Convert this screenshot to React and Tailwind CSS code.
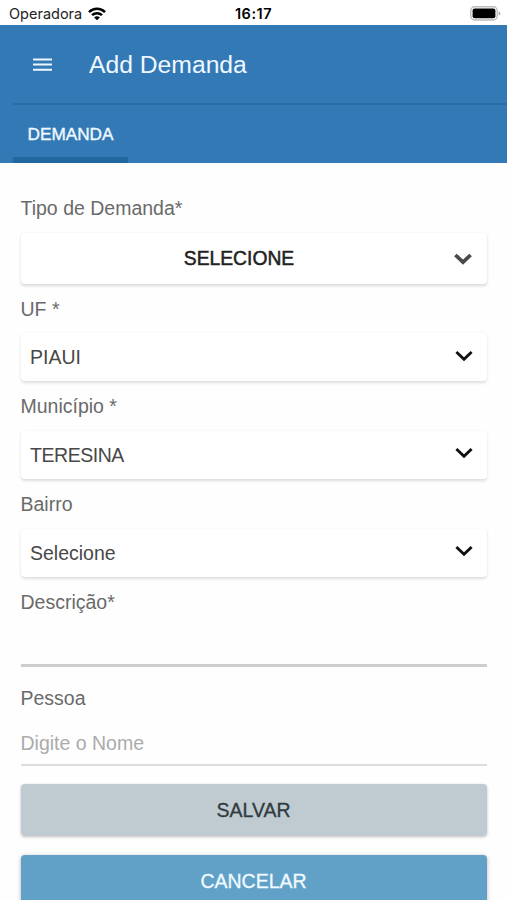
import React from "react";

function Chevron({ muted }) {
  return (
    <svg
      width="18"
      height="12"
      viewBox="0 0 18 12"
      fill="none"
      className={muted ? "mr-[15px] mt-px shrink-0 stroke-[#4a4a4a]" : "mr-[14px] -mt-[3px] shrink-0 stroke-[#111111]"}
      strokeWidth={muted ? 3.7 : 2.9}
    >
      <path d="M1.4 2 L9 9.2 L16.6 2" />
    </svg>
  );
}

function Label({ children }) {
  return <div className="h-[24px] whitespace-nowrap text-[19.5px] leading-[24px] text-[#6a6a6a]">{children}</div>;
}

function SelectField({ label, value, tight }) {
  return (
    <div className="flex flex-col gap-[12.5px]">
      <Label>{label}</Label>
      <div className="flex h-[48px] items-center justify-between rounded-[4px] bg-white pl-[9.5px] shadow-[0_1.5px_3px_rgba(0,0,0,0.13)]">
        <span className={`text-[19.5px] leading-[24px] text-[#484848] ${tight ? "tracking-[-0.45px]" : ""}`}>{value}</span>
        <Chevron />
      </div>
    </div>
  );
}

function StatusBar() {
  return (
    <div className="grid h-[25px] shrink-0 grid-cols-3 items-center bg-white pl-[9px] pr-[6px] font-['Inter',sans-serif] text-black">
      <div className="flex items-center gap-[6px] pt-[2px]">
        <span className="text-[14.5px] leading-[20px] text-[#222222]">Operadora</span>
        <svg width="18" height="14" viewBox="0 0 18 14" fill="none" stroke="#000" strokeWidth="2.5" className="shrink-0">
          <path d="M1 5.1 C5.5 .6 12.5 .6 17 5.1" />
          <path d="M4 8.2 C6.8 5.5 11.2 5.5 14 8.2" />
          <path d="M9 13.3 L6.1 10.4 C7.7 8.8 10.3 8.8 11.9 10.4Z" fill="#000" stroke="none" />
        </svg>
      </div>
      <div className="pr-[3px] pt-[2px] text-center text-[14.5px] font-semibold leading-[20px] tracking-[0.5px]">16:17</div>
      <svg width="31" height="15" viewBox="0 0 31 15" className="mt-px justify-self-end">
        <rect x=".8" y=".8" width="26.4" height="13.2" rx="4" fill="white" stroke="#bcbcbc" strokeWidth="1.4" />
        <rect x="2.6" y="2.6" width="22.8" height="9.6" rx="2" fill="#000" />
        <path d="M28.7 5.2 Q30.5 6 30.5 7.4 Q30.5 8.8 28.7 9.6Z" fill="#a8a8a8" />
      </svg>
    </div>
  );
}

export default function App() {
  return (
    <div className="flex h-[900px] w-[507px] flex-col overflow-hidden bg-[#fefefe] font-['Liberation_Sans',Arial,sans-serif]">
      <StatusBar />
      <header className="flex h-[138px] shrink-0 flex-col bg-[#3379b6]">
        <div className="flex h-[78px] items-center pl-[33px] pt-[2px]">
          <svg width="19" height="14" viewBox="0 0 19 14" stroke="#eef7ff" strokeWidth="2" className="shrink-0">
            <path d="M0 1.5H19M0 6.5H19M0 11.7H19" />
          </svg>
          <h1 className="ml-[37px] text-[24.7px] leading-[30px] text-[#eff8ff]">Add Demanda</h1>
        </div>
        <div className="ml-[13px] flex h-[60px] border-t-2 border-[#2b6da7]">
          <div className="flex h-[58px] w-[115px] items-center justify-center border-b-[6px] border-[#22679e] pt-[5px] text-[17.2px] leading-[24px] text-[#eff8ff] [-webkit-text-stroke:0.4px_#eff8ff]">
            DEMANDA
          </div>
        </div>
      </header>
      <main className="flex shrink-0 flex-col px-[20.5px] pt-[33px]">
        <Label>Tipo de Demanda*</Label>
        <div className="mt-[13px] flex h-[51px] items-center rounded-[4px] bg-white shadow-[0_1.5px_3px_rgba(0,0,0,0.15)]">
          <span className="flex-1 pl-[4px] text-center text-[19.3px] leading-[24px] text-[#222222] [-webkit-text-stroke:0.5px_#222222]">
            SELECIONE
          </span>
          <Chevron muted />
        </div>
        <div className="mt-[12.5px] flex flex-col gap-[13.25px]">
          <SelectField label="UF *" value="PIAUI" />
          <SelectField label="Município *" value="TERESINA" tight />
          <SelectField label="Bairro" value="Selecione" />
        </div>
        <div className="mt-[13.5px] flex h-[76.5px] flex-col border-b-[3px] border-[#cecece]">
          <Label>Descrição*</Label>
        </div>
        <div className="mt-[19px] flex h-[80px] flex-col gap-[21px] border-b-2 border-[#dddddd]">
          <Label>Pessoa</Label>
          <div className="text-[19.5px] leading-[24px] text-[#ababab]">Digite o Nome</div>
        </div>
        <button className="mt-[18px] h-[51px] rounded-[4px] bg-[#bfcbd0] pt-px text-[19.5px] leading-[24px] text-[#303b40] shadow-[0_1.5px_3px_rgba(0,0,0,0.25)] [-webkit-text-stroke:0.3px_#303b40]">
          SALVAR
        </button>
        <button className="mt-[20px] h-[51px] rounded-[4px] bg-[#61a1c7] pt-px text-[19.5px] leading-[24px] text-[#f0faff] shadow-[0_1.5px_4px_rgba(0,0,0,0.3)] [-webkit-text-stroke:0.3px_#f0faff]">
          CANCELAR
        </button>
      </main>
    </div>
  );
}
